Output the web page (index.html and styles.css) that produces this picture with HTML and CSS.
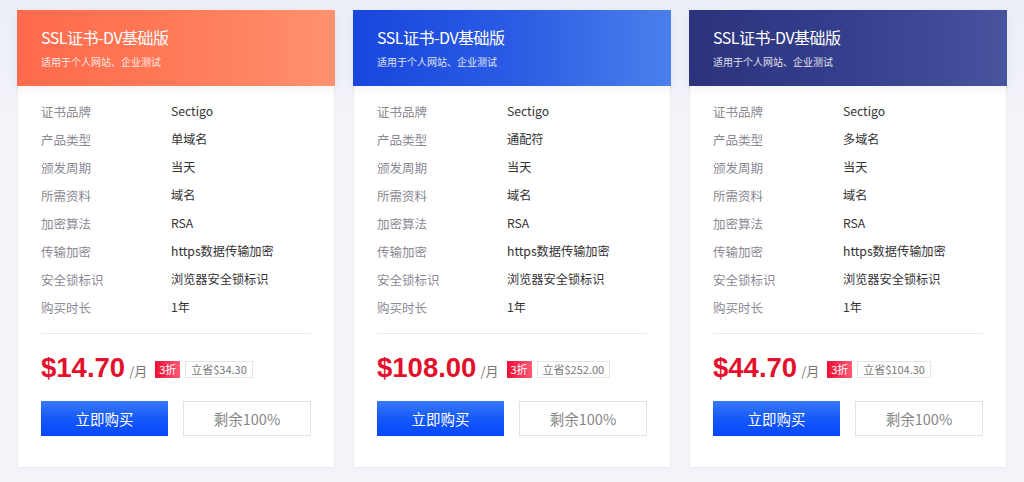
FILE: index.html
```html
<!DOCTYPE html>
<html lang="zh-CN">
<head>
<meta charset="utf-8">
<link rel="stylesheet" href="styles.css">
</head>
<body>
<div class="plans">
  <div class="card">
    <div class="head head-orange">
      <div class="title">SSL证书-DV基础版</div>
      <div class="sub">适用于个人网站、企业测试</div>
    </div>
    <div class="body">
      <div class="specs">
        <div class="row"><span class="k">证书品牌</span><span class="v">Sectigo</span></div>
        <div class="row"><span class="k">产品类型</span><span class="v">单域名</span></div>
        <div class="row"><span class="k">颁发周期</span><span class="v">当天</span></div>
        <div class="row"><span class="k">所需资料</span><span class="v">域名</span></div>
        <div class="row"><span class="k">加密算法</span><span class="v">RSA</span></div>
        <div class="row"><span class="k">传输加密</span><span class="v">https数据传输加密</span></div>
        <div class="row"><span class="k">安全锁标识</span><span class="v">浏览器安全锁标识</span></div>
        <div class="row"><span class="k">购买时长</span><span class="v">1年</span></div>
      </div>
      <div class="price">
        <span class="amt">$14.70</span><span class="unit">/月</span>
        <span class="disc">3折</span><span class="save">立省$34.30</span>
      </div>
      <div class="btns">
        <button class="buy">立即购买</button>
        <button class="left">剩余100%</button>
      </div>
    </div>
  </div>
  <div class="card">
    <div class="head head-blue">
      <div class="title">SSL证书-DV基础版</div>
      <div class="sub">适用于个人网站、企业测试</div>
    </div>
    <div class="body">
      <div class="specs">
        <div class="row"><span class="k">证书品牌</span><span class="v">Sectigo</span></div>
        <div class="row"><span class="k">产品类型</span><span class="v">通配符</span></div>
        <div class="row"><span class="k">颁发周期</span><span class="v">当天</span></div>
        <div class="row"><span class="k">所需资料</span><span class="v">域名</span></div>
        <div class="row"><span class="k">加密算法</span><span class="v">RSA</span></div>
        <div class="row"><span class="k">传输加密</span><span class="v">https数据传输加密</span></div>
        <div class="row"><span class="k">安全锁标识</span><span class="v">浏览器安全锁标识</span></div>
        <div class="row"><span class="k">购买时长</span><span class="v">1年</span></div>
      </div>
      <div class="price">
        <span class="amt">$108.00</span><span class="unit">/月</span>
        <span class="disc">3折</span><span class="save">立省$252.00</span>
      </div>
      <div class="btns">
        <button class="buy">立即购买</button>
        <button class="left">剩余100%</button>
      </div>
    </div>
  </div>
  <div class="card">
    <div class="head head-navy">
      <div class="title">SSL证书-DV基础版</div>
      <div class="sub">适用于个人网站、企业测试</div>
    </div>
    <div class="body">
      <div class="specs">
        <div class="row"><span class="k">证书品牌</span><span class="v">Sectigo</span></div>
        <div class="row"><span class="k">产品类型</span><span class="v">多域名</span></div>
        <div class="row"><span class="k">颁发周期</span><span class="v">当天</span></div>
        <div class="row"><span class="k">所需资料</span><span class="v">域名</span></div>
        <div class="row"><span class="k">加密算法</span><span class="v">RSA</span></div>
        <div class="row"><span class="k">传输加密</span><span class="v">https数据传输加密</span></div>
        <div class="row"><span class="k">安全锁标识</span><span class="v">浏览器安全锁标识</span></div>
        <div class="row"><span class="k">购买时长</span><span class="v">1年</span></div>
      </div>
      <div class="price">
        <span class="amt">$44.70</span><span class="unit">/月</span>
        <span class="disc">3折</span><span class="save">立省$104.30</span>
      </div>
      <div class="btns">
        <button class="buy">立即购买</button>
        <button class="left">剩余100%</button>
      </div>
    </div>
  </div>
</div>
</body>
</html>
```

FILE: styles.css
```css
* { box-sizing: border-box; }
html, body { margin: 0; padding: 0; }
body {
  background: linear-gradient(#eceef6, #f3f4fa 120px);
  font-family: "Noto Sans CJK SC", "Noto Sans", sans-serif;
  width: 1024px;
  height: 482px;
  overflow: hidden;
}
.plans {
  display: flex;
  gap: 18px;
  padding: 10px 17px 0;
}
.card {
  width: 318px;
  height: 458px;
  background: #fff;
  border: 1px solid #e9eaf1;
  border-top: none;
  display: flex;
  flex-direction: column;
}
.head {
  height: 76px;
  margin: 0 -1px;
  padding: 15px 24px 0;
  color: #fff;
  box-shadow: 0 4px 12px rgba(40, 50, 90, 0.06);
  position: relative;
}
.head-orange { background: linear-gradient(90deg, #ff6a4c 0%, #ff7a58 50%, #ff916f 100%); }
.head-blue { background: linear-gradient(90deg, #1946dd 0%, #2b5be3 50%, #4b7fec 100%); }
.head-navy { background: linear-gradient(90deg, #2c337d 0%, #353f8d 50%, #48549e 100%); }
.title {
  font-size: 16px;
  line-height: 24px;
  letter-spacing: -0.5px;
}
.sub {
  font-size: 10px;
  line-height: 14px;
  margin-top: 6px;
  opacity: 0.85;
}
.body {
  padding: 11px 23px 0;
  display: flex;
  flex-direction: column;
}
.specs {
  border-bottom: 1px solid #e9e9ee;
  padding-bottom: 12px;
}
.row {
  display: flex;
  height: 28px;
  align-items: center;
  font-size: 12.5px;
}
.k { width: 130px; color: #8a8a94; }
.v { color: #333; font-size: 12.2px; }
.price {
  display: flex;
  align-items: center;
  height: 67px;
}
.amt {
  font-family: "Liberation Sans", Arial, sans-serif;
  font-weight: bold;
  font-size: 27.5px;
  color: #e4102b;
}
.unit {
  font-size: 13px;
  color: #777;
  margin-left: 4px;
  margin-right: 8px;
  margin-top: 6px;
}
.disc {
  height: 17px;
  width: 25px;
  display: inline-flex;
  align-items: center;
  justify-content: center;
  background: linear-gradient(90deg, #ec0f35, #ff5a75);
  color: #fff;
  font-size: 11px;
  margin-right: 5px;
  margin-top: 3px;
}
.save {
  height: 17px;
  display: inline-flex;
  align-items: center;
  padding: 0 5px;
  border: 1px solid #e4e4ea;
  color: #777;
  font-size: 11px;
  margin-top: 3px;
}
.btns {
  display: flex;
  gap: 15px;
}
.btns button {
  font-family: "Noto Sans CJK SC", sans-serif;
  height: 35px;
  font-size: 14.5px;
  border-radius: 0;
  cursor: pointer;
}
.buy {
  width: 127px;
  border: none;
  color: #fff;
  background: linear-gradient(180deg, #3a79fb 0%, #1559fb 50%, #0548fa 100%);
}
.left {
  width: 128px;
  border: 1px solid #e2e3ea;
  background: #fff;
  color: #888;
}
```
